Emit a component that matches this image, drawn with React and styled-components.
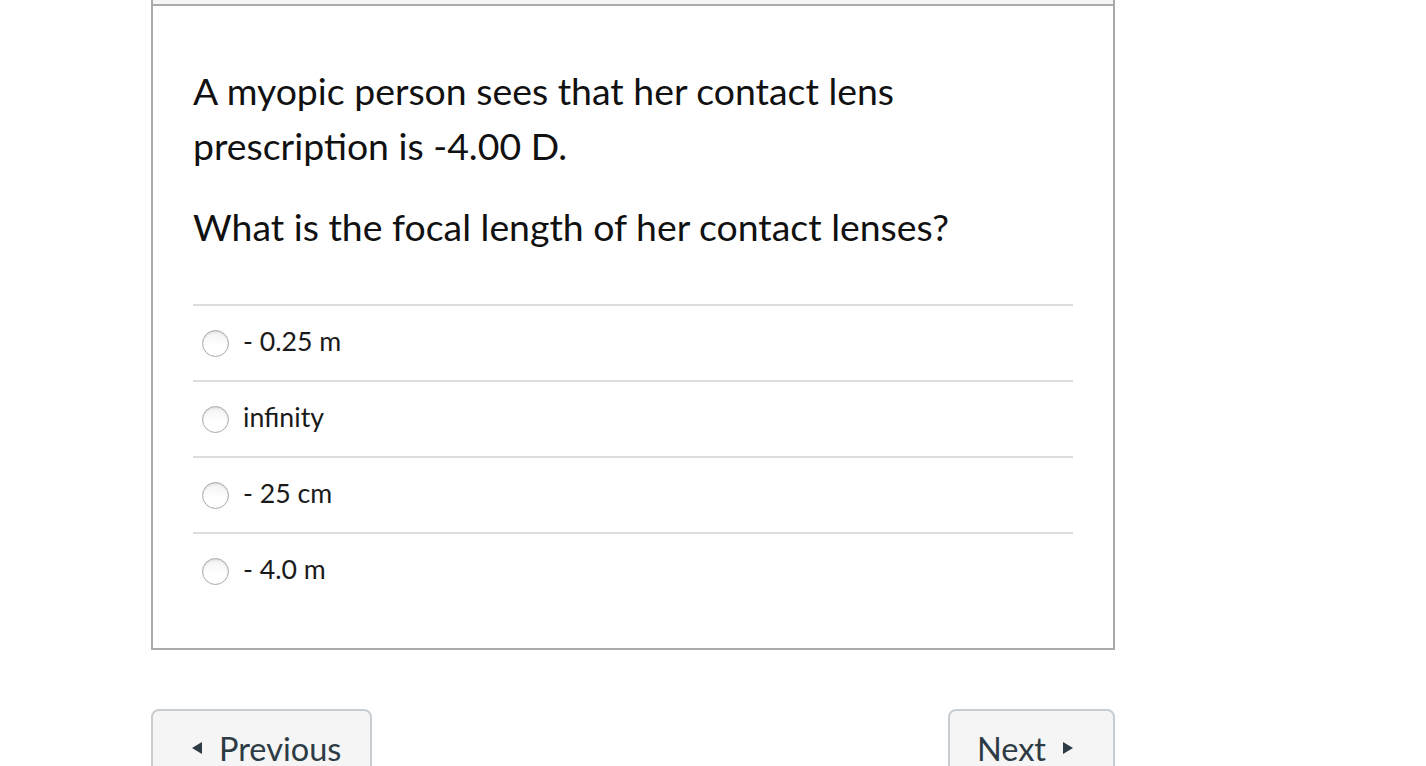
import React from 'react'
import styled, { createGlobalStyle } from 'styled-components'

const GlobalStyle = createGlobalStyle`
  html, body {
    margin: 0;
    padding: 0;
    background: #fff;
    overflow: hidden;
  }
  body {
    font-family: Lato, "Open Sans", "Liberation Sans", sans-serif;
  }
`

const Page = styled.div`
  width: 964px;
  margin-left: 151px;
`

const Card = styled.div`
  margin-top: -50px;
  border: 2px solid #aaaaaa;
  background: #fff;
`

const CardHeader = styled.div`
  height: 52px;
  background: #f5f5f5;
  border-bottom: 2px solid #aaaaaa;
`

const CardBody = styled.div`
  padding: 57px 40px 40px;
`

const Question = styled.div`
  font-size: 37.4px;
  line-height: 55px;
  color: #111;

  p {
    margin: 0 0 26px;
  }
  p:last-child {
    margin-bottom: 0;
  }
`

const Answers = styled.div`
  margin-top: 50px;
`

const Answer = styled.label`
  display: flex;
  align-items: center;
  height: 74px;
  border-top: 2px solid #dddddd;
  padding-left: 9px;
  font-size: 26.7px;
  color: #1a1a1a;
  cursor: pointer;
`

const Label = styled.span`
  margin-top: -4px;
`

const Radio = styled.span`
  box-sizing: border-box;
  width: 27px;
  height: 27px;
  border-radius: 50%;
  border: 1px solid #a9a9a9;
  background: linear-gradient(#f2f2f2, #ffffff 60%);
  box-shadow: inset 0 1px 2px rgba(0, 0, 0, 0.12);
  margin-right: 14px;
  flex-shrink: 0;
`

const Footer = styled.div`
  display: flex;
  justify-content: space-between;
  margin-top: 59px;
`

const NavButton = styled.button`
  display: flex;
  align-items: center;
  gap: ${p => (p.$next ? '17px' : '17px')};
  height: 78px;
  padding: ${p => (p.$next ? '0 40px 0 27px' : '0 29px 0 39px')};
  background: #f5f5f5;
  border: 2px solid #c7cdd1;
  border-radius: 8px;
  color: #2d3b45;
  font-family: inherit;
  font-size: 32.5px;
  cursor: pointer;
`

const Caret = ({ dir }) => (
  <svg width="10" height="12" viewBox="0 0 10 12">
    {dir === 'left'
      ? <polygon points="10,0 10,12 0,6" fill="#2d3b45" />
      : <polygon points="0,0 0,12 10,6" fill="#2d3b45" />}
  </svg>
)

const answers = ['- 0.25 m', 'infinity', '- 25 cm', '- 4.0 m']

export default function App() {
  return (
    <>
      <GlobalStyle />
      <Page>
        <Card>
          <CardHeader />
          <CardBody>
            <Question>
              <p>A myopic person sees that her contact lens<br />prescription is -4.00 D.</p>
              <p>What is the focal length of her contact lenses?</p>
            </Question>
            <Answers>
              {answers.map(a => (
                <Answer key={a}>
                  <Radio />
                  <Label>{a}</Label>
                </Answer>
              ))}
            </Answers>
          </CardBody>
        </Card>
        <Footer>
          <NavButton>
            <Caret dir="left" />
            Previous
          </NavButton>
          <NavButton $next>
            Next
            <Caret dir="right" />
          </NavButton>
        </Footer>
      </Page>
    </>
  )
}
